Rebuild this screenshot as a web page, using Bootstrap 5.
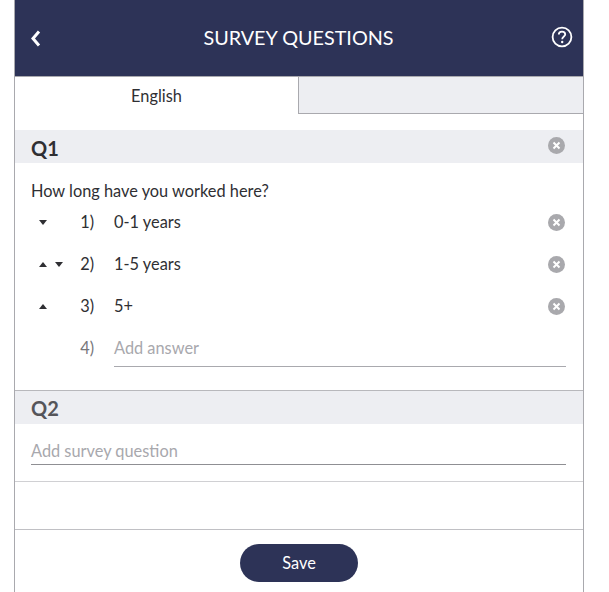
<!DOCTYPE html>
<html lang="en">

<head>
    <meta charset="UTF-8">
    <meta name="viewport" content="width=device-width, initial-scale=1.0">
    <title>Survey Questions</title>
    <link href="https://cdn.jsdelivr.net/npm/bootstrap@5.3.0/dist/css/bootstrap.min.css" rel="stylesheet">
    <style>
        body {
            background-color: #fff;
            font-family: 'Lato', sans-serif;
            font-size: 16.35px;
            color: #2f2f33;
            overflow: hidden;
        }

        /* Phone frame */
        .survey-shell {
            width: 570px;
            height: 592px;
            margin-left: 14px;
            border-left: 1px solid #a9a9ae;
            border-right: 1px solid #a9a9ae;
        }

        .survey-header {
            height: 77px;
            background-color: #2d3357;
            border-bottom: 1px solid #a9a9ae;
            color: #fff;
            padding: 0 9px 0 13px;
        }

        .survey-title {
            font-size: 19.8px;
            line-height: 24px;
            margin-bottom: 2px;
        }

        .help-icon {
            margin-bottom: 2px;
        }

        /* Language tabs */
        .lang-tabs {
            height: 37px;
        }

        .lang-on {
            width: 283px;
            line-height: 37px;
            text-align: center;
        }

        .lang-off {
            background-color: #edeef2;
            border-left: 1px solid #a9a9ae;
            border-bottom: 1px solid #a9a9ae;
        }

        /* Question bands */
        .q-band {
            height: 33px;
            background-color: #edeef2;
            padding: 0 18px 0 16px;
            font-size: 20px;
            font-weight: 700;
            line-height: 33px;
        }

        .q-band .q-label {
            padding-top: 3px;
        }

        .q-band svg {
            margin-bottom: 2px;
        }

        .q-band.q-empty {
            padding-top: 1px;
            color: #55555a;
        }

        .q-text {
            height: 38px;
            padding: 17px 16px 0;
            line-height: 22px;
        }

        .answer-line {
            height: 42px;
            padding: 0 18px 0 16px;
        }

        .move-box {
            width: 40px;
            padding-left: 8px;
        }

        .move-cell {
            width: 20px;
        }

        .answer-num {
            width: 23px;
            margin-right: 20px;
            text-align: right;
        }

        .is-hint {
            color: #a8a8ad;
        }

        .num-hint {
            color: #77777c;
        }

        .answer-input {
            margin-right: -1px;
            height: 37px;
            line-height: 35px;
            border-bottom: 1px solid #a9a9ae;
        }

        .q-input-wrap {
            height: 58px;
            padding: 0 17px 0 16px;
            border-bottom: 1px solid #d0d0d3;
        }

        .q-input {
            height: 41px;
            padding-top: 16px;
            line-height: 22px;
            border-bottom: 1px solid #8f8f93;
        }

        .q-gap {
            height: 48px;
            border-bottom: 1px solid #c0c0c4;
        }

        .save-btn {
            width: 118px;
            height: 38px;
            margin-top: 14px;
            padding: 1px 0 0;
            background-color: #2d3357;
            border: 0;
            border-radius: 19px;
            color: #fff;
            font-size: 16.35px;
        }

        .q1-block {
            height: 261px;
            border-bottom: 1px solid #b8b8bc;
        }
    </style>
</head>

<body>

    <div class="survey-shell d-flex flex-column">
        <!-- Header -->
        <div class="survey-header d-flex align-items-center justify-content-between">
            <svg width="19" height="18" viewBox="0 0 19 18">
                <path d="M11 2.5 L5 9.5 L11 16.5" fill="none" stroke="#fff" stroke-width="3" />
            </svg>
            <span class="survey-title">SURVEY QUESTIONS</span>
            <svg width="24" height="24" viewBox="0 0 24 24" class="help-icon">
                <circle cx="12" cy="12" r="9.4" fill="none" stroke="#fff" stroke-width="1.8" />
                <path d="M8.8 9.6 C8.8 7.6 10.2 6.6 12 6.6 C13.8 6.6 15.2 7.7 15.2 9.4 C15.2 11.4 12.2 11.7 12.2 14.3" fill="none" stroke="#fff" stroke-width="1.8" />
                <circle cx="12.2" cy="17" r="1.2" fill="#fff" />
            </svg>
        </div>

        <!-- Language tabs -->
        <div class="lang-tabs d-flex mb-3">
            <div class="lang-on">English</div>
            <div class="lang-off flex-grow-1"></div>
        </div>

        <!-- Q1 -->
        <div class="q1-block">
            <div class="q-band d-flex align-items-center justify-content-between">
                <span class="q-label">Q1</span>
                <svg width="17" height="17" viewBox="0 0 17 17">
                    <circle cx="8.5" cy="8.5" r="8.5" fill="#a9a9ad" />
                    <path d="M5.5 5.5 L11.5 11.5 M11.5 5.5 L5.5 11.5" stroke="#fff" stroke-width="2" />
                </svg>
            </div>
            <div class="q-text">How long have you worked here?</div>

            <div class="answer-line d-flex align-items-center">
                <div class="move-box d-flex">
                    <div class="move-cell">
                        <svg width="8" height="5" viewBox="0 0 8 5" class="d-block"><path d="M0 0 H8 L4 5 Z" fill="#2f2f33" /></svg>
                    </div>
                </div>
                <div class="answer-num">1)</div>
                <div class="flex-grow-1">0-1 years</div>
                <svg width="17" height="17" viewBox="0 0 17 17">
                    <circle cx="8.5" cy="8.5" r="8.5" fill="#a9a9ad" />
                    <path d="M5.5 5.5 L11.5 11.5 M11.5 5.5 L5.5 11.5" stroke="#fff" stroke-width="2" />
                </svg>
            </div>

            <div class="answer-line d-flex align-items-center">
                <div class="move-box d-flex">
                    <div class="move-cell">
                        <svg width="8" height="5" viewBox="0 0 8 5" class="d-block"><path d="M0 5 H8 L4 0 Z" fill="#2f2f33" /></svg>
                    </div>
                    <div class="move-cell">
                        <svg width="8" height="5" viewBox="0 0 8 5" class="d-block"><path d="M0 0 H8 L4 5 Z" fill="#2f2f33" /></svg>
                    </div>
                </div>
                <div class="answer-num">2)</div>
                <div class="flex-grow-1">1-5 years</div>
                <svg width="17" height="17" viewBox="0 0 17 17">
                    <circle cx="8.5" cy="8.5" r="8.5" fill="#a9a9ad" />
                    <path d="M5.5 5.5 L11.5 11.5 M11.5 5.5 L5.5 11.5" stroke="#fff" stroke-width="2" />
                </svg>
            </div>

            <div class="answer-line d-flex align-items-center">
                <div class="move-box d-flex">
                    <div class="move-cell">
                        <svg width="8" height="5" viewBox="0 0 8 5" class="d-block"><path d="M0 5 H8 L4 0 Z" fill="#2f2f33" /></svg>
                    </div>
                </div>
                <div class="answer-num">3)</div>
                <div class="flex-grow-1">5+</div>
                <svg width="17" height="17" viewBox="0 0 17 17">
                    <circle cx="8.5" cy="8.5" r="8.5" fill="#a9a9ad" />
                    <path d="M5.5 5.5 L11.5 11.5 M11.5 5.5 L5.5 11.5" stroke="#fff" stroke-width="2" />
                </svg>
            </div>

            <div class="answer-line d-flex align-items-center">
                <div class="move-box"></div>
                <div class="answer-num num-hint">4)</div>
                <div class="flex-grow-1 answer-input is-hint">Add answer</div>
            </div>
        </div>

        <!-- Q2 -->
        <div class="q-band q-empty">Q2</div>
        <div class="q-input-wrap">
            <div class="q-input is-hint">Add survey question</div>
        </div>
        <div class="q-gap"></div>

        <!-- Footer -->
        <div class="text-center">
            <button type="button" class="btn save-btn">Save</button>
        </div>
    </div>

    <script src="https://cdn.jsdelivr.net/npm/bootstrap@5.3.0/dist/js/bootstrap.bundle.min.js"></script>
</body>

</html>
